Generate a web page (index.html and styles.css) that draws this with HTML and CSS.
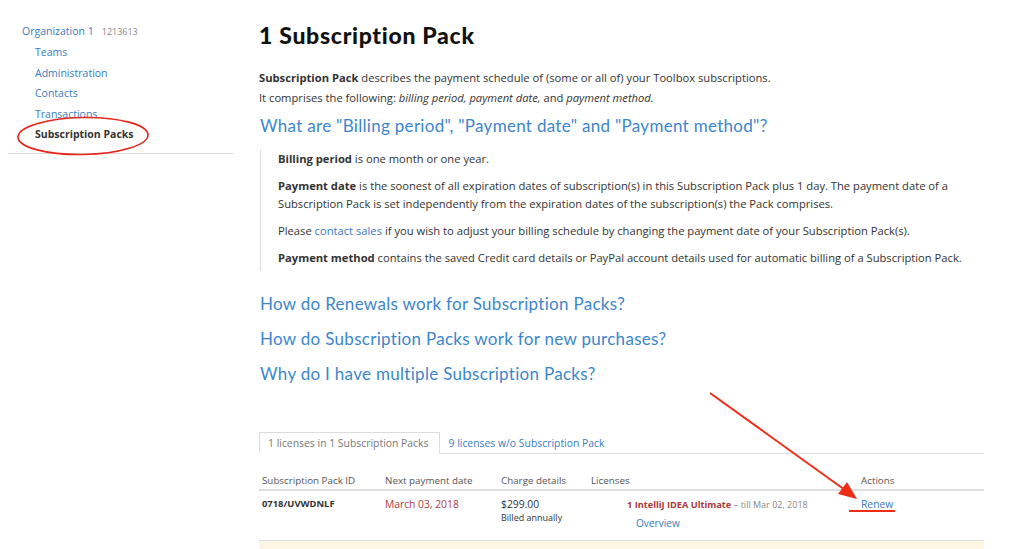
FILE: index.html
```html
<!DOCTYPE html>
<html>
<head>
<meta charset="utf-8">
<link rel="stylesheet" href="styles.css">
</head>
<body>
<div class="page">
  <aside class="sidebar">
    <div class="org"><a href="#">Organization 1</a><span class="org-id">1213613</span></div>
    <ul class="nav">
      <li><a href="#">Teams</a></li>
      <li><a href="#">Administration</a></li>
      <li><a href="#">Contacts</a></li>
      <li><a href="#">Transactions</a></li>
      <li class="active">Subscription Packs</li>
    </ul>
  </aside>
  <main class="main">
    <h1 class="title">1 Subscription Pack</h1>
    <p class="intro"><b>Subscription Pack</b> describes the payment schedule of (some or all of) your Toolbox subscriptions.<br>It comprises the following: <i>billing period, payment date,</i> and <i>payment method.</i></p>
    <h3 class="q">What are "Billing period", "Payment date" and "Payment method"?</h3>
    <div class="answer">
      <p><b>Billing period</b> is one month or one year.</p>
      <p><b>Payment date</b> is the soonest of all expiration dates of subscription(s) in this Subscription Pack plus 1 day. The payment date of a Subscription Pack is set independently from the expiration dates of the subscription(s) the Pack comprises.</p>
      <p>Please <a href="#">contact sales</a> if you wish to adjust your billing schedule by changing the payment date of your Subscription Pack(s).</p>
      <p><b>Payment method</b> contains the saved Credit card details or PayPal account details used for automatic billing of a Subscription Pack.</p>
    </div>
    <h3 class="q q-list">How do Renewals work for Subscription Packs?</h3>
    <h3 class="q q-list">How do Subscription Packs work for new purchases?</h3>
    <h3 class="q q-list">Why do I have multiple Subscription Packs?</h3>

    <div class="tabs">
      <span class="tab active">1 licenses in 1 Subscription Packs</span>
      <a class="tab" href="#">9 licenses w/o Subscription Pack</a>
    </div>
    <table class="packs">
      <thead>
        <tr>
          <th class="c-id">Subscription Pack ID</th>
          <th class="c-date">Next payment date</th>
          <th class="c-charge">Charge details</th>
          <th class="c-lic">Licenses</th>
          <th class="c-act">Actions</th>
        </tr>
      </thead>
      <tbody>
        <tr>
          <td class="pid">0718/UVWDNLF</td>
          <td class="date">March 03, 2018</td>
          <td><div class="price">$299.00</div><div class="billed">Billed annually</div></td>
          <td class="lic"><div><span class="prod">1 IntelliJ IDEA Ultimate</span> <span class="till">– till Mar 02, 2018</span></div><a class="overview" href="#">Overview</a></td>
          <td><a class="renew" href="#">Renew</a></td>
        </tr>
      </tbody>
    </table>
    <div class="notice"></div>
  </main>
</div>
<svg class="annot" width="1030" height="549" viewBox="0 0 1030 549">
  <ellipse cx="83" cy="136" rx="65" ry="18.5" fill="none" stroke="#e5261a" stroke-width="1.6" transform="rotate(-1 83 136)"/>
  <line x1="710" y1="393" x2="845" y2="490" stroke="#ee2d18" stroke-width="2"/>
  <polygon points="857,499 838,494 847,482" fill="#ee2d18"/>
  <line x1="849" y1="511" x2="895" y2="511" stroke="#ee2d18" stroke-width="2"/>
</svg>
</body>
</html>
```
FILE: styles.css
```css
html, body {
  margin: 0;
  padding: 0;
  background: #fff;
}
body {
  font-family: "Open Sans", "Liberation Sans", sans-serif;
  color: #333;
  width: 1030px;
  height: 549px;
  overflow: hidden;
  position: relative;
}
a {
  color: #3a7bc0;
  text-decoration: none;
}
.page {
  display: flex;
  align-items: flex-start;
}
.sidebar {
  margin-left: 8px;
  width: 225px;
  padding-top: 21px;
  border-bottom: 1px solid #d9d9d9;
  padding-bottom: 8px;
}
.org {
  padding-left: 14px;
  font-size: 10.5px;
  line-height: 20px;
}
.org-id {
  color: #888;
  font-size: 9px;
  margin-left: 8px;
}
.nav {
  list-style: none;
  margin: 0;
  padding: 0 0 0 27px;
  font-size: 10.5px;
  line-height: 20.5px;
}
.nav .active {
  font-weight: 700;
  color: #333;
}
.main {
  margin-left: 26px;
  width: 725px;
}
.title {
  font-family: "Lato", "Liberation Sans", sans-serif;
  font-weight: 900;
  font-size: 23px;
  line-height: 30px;
  margin: 20px 0 0;
  color: #111;
  letter-spacing: 0.7px;
}
.intro {
  margin: 18px 0 0;
  font-size: 11.2px;
  line-height: 20px;
}
.intro b { font-weight: 700; }
.q {
  font-family: "Lato", "Liberation Sans", sans-serif;
  font-weight: 400;
  font-size: 17px;
  line-height: 24px;
  color: #3d86cc;
  margin: 6px 0 0 1px;
  letter-spacing: 0.3px;
}
.answer {
  margin: 12px 0 0 1px;
  border-left: 1px solid #ddd;
  padding: 0 0 4px 17px;
  font-size: 11.2px;
  line-height: 18px;
}
.answer p {
  margin: 0 0 9px;
}
.answer p:last-child { margin-bottom: 0; }
.q-list {
  margin-top: 11px;
}
.answer + .q-list {
  margin-top: 21px;
}
.tabs {
  margin-top: 46px;
  display: flex;
  border-bottom: 1px solid #dcdcdc;
  font-size: 10.4px;
  line-height: 20px;
}
.tab {
  padding: 0 10px 0 8px;
  border: 1px solid transparent;
  margin-bottom: -1px;
}
.tab.active {
  color: #777;
  border-color: #dcdcdc;
  border-bottom-color: #fff;
  background: #fff;
}
.packs {
  width: 100%;
  border-collapse: collapse;
  font-size: 10px;
  margin-top: 20px;
}
.packs th {
  text-align: left;
  font-weight: 400;
  font-size: 9.8px;
  color: #555;
  padding: 0 0 1px 3px;
  line-height: 14px;
  border-bottom: 2px solid #ddd;
}
.c-id { width: 120px; }
.c-date { width: 113px; }
.c-charge { width: 87px; }
.c-lic { width: 267px; }
.packs td {
  vertical-align: top;
  padding: 6px 0 10px 3px;
  line-height: 14px;
  border-bottom: 1px solid #ddd;
}
.pid {
  font-weight: 700;
  font-size: 9.4px;
  color: #333;
}
.date {
  color: #b03a3e;
  font-size: 10.3px;
}
.price {
  font-size: 10.3px;
}
.billed {
  font-size: 9px;
}
.lic {
  padding-left: 39px !important;
}
.prod {
  color: #a8373a;
  font-weight: 700;
  font-size: 9.2px;
}
.till {
  color: #888;
  font-size: 9px;
}
.overview {
  display: inline-block;
  margin-left: 9px;
  font-size: 10.1px;
  margin-top: 4px;
}
.renew {
  font-size: 10.3px;
}
.notice {
  height: 20px;
  background: #fdf6e3;
}
.annot {
  position: absolute;
  left: 0;
  top: 0;
  pointer-events: none;
}
```
